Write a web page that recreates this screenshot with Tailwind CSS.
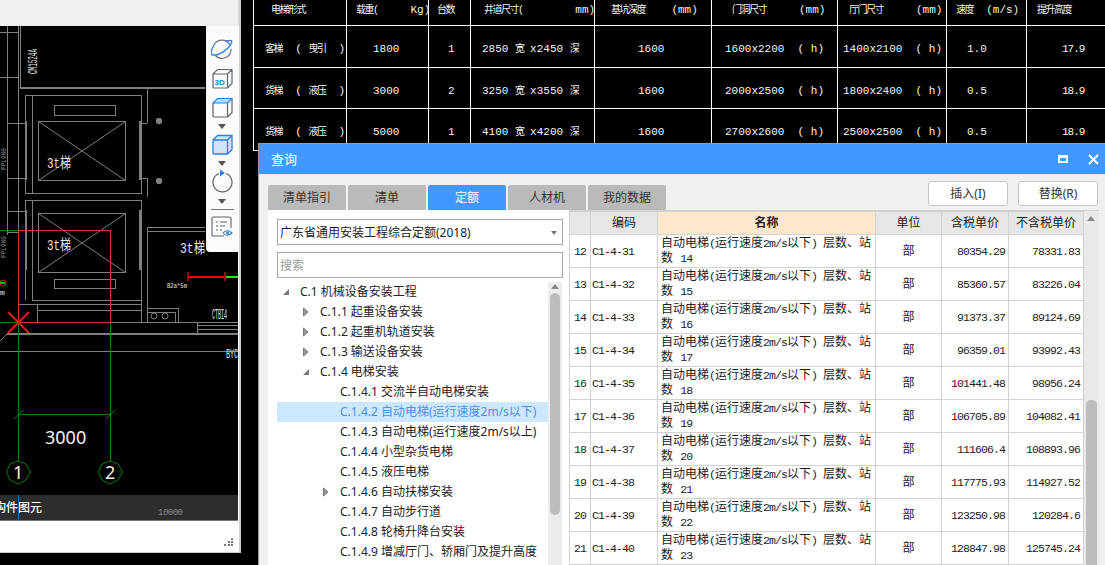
<!DOCTYPE html>
<html lang="zh-CN">
<head>
    <meta charset="UTF-8">
    <title>查询</title>
    <script src="https://cdn.jsdelivr.net/npm/@tailwindcss/browser@4"></script>
</head>
<body class="bg-black overflow-hidden font-['Noto_Sans','Noto_Sans_CJK_SC',sans-serif]">
<div class="relative w-[1105px] h-[565px] overflow-hidden">

    <!-- CAD window -->
    <div class="absolute left-0 top-0 w-[241px] h-[553px] bg-white border-r-2 border-b border-[#d0d0d0] flex flex-col">
        <div class="h-[26px] bg-[#f0f0f0] border-r border-[#dcdcdc]"></div>
        <div class="relative w-[238px] h-[495px] bg-black overflow-hidden">
            <svg class="block" width="238" height="495" viewBox="0 26 238 495" fill="none" stroke="#7f7f7f" stroke-width="1" shape-rendering="crispEdges">
                <!-- walls -->
                <path d="M7.5 26V235M18.5 26V322M0 32.5H18M0 77.5H18M20.5 26V87M20 87.5H205M20 88.5H205M7 123.5H25M7 178.5H25M7 211.5H25M7 232.5H18"/>
                <path d="M147.5 88V123M141 123.5H147M141 178.5H147M147.5 178V197M147 227.5H205M147 231.5H205M147.5 227V322"/>
                <!-- lift 1 -->
                <rect x="25" y="95" width="116" height="98"/>
                <path d="M32.5 95V193"/>
                <rect x="54" y="105" width="61" height="10"/>
                <rect x="38.5" y="121.5" width="87" height="59"/>
                <path d="M38.5 121.5L125.5 180.5M125.5 121.5L38.5 180.5" shape-rendering="auto"/>
                <path d="M26 121V180M140 121V180" stroke-width="2"/>
                <circle cx="159" cy="121" r="2.5" fill="#7f7f7f"/>
                <circle cx="159" cy="181" r="2.5" fill="#7f7f7f"/>
                <!-- lift 2 -->
                <path d="M25.5 300V200H141V300M32.5 200V300"/>
                <rect x="38.5" y="213.5" width="87" height="59"/>
                <path d="M38.5 213.5L125.5 272.5M125.5 213.5L38.5 272.5" shape-rendering="auto"/>
                <path d="M26 210V270M140 210V270" stroke-width="2"/>
                <rect x="54" y="279" width="61" height="9"/>
                <path d="M32 300.5H141M18 304.5H141M37 310.5H141M37.5 304V322M141.5 200V322"/>
                <path d="M147 308.5H178V322M147 312.5H175V322"/>
                <circle cx="154" cy="316" r="3" shape-rendering="auto"/>
                <circle cx="165" cy="316" r="3" shape-rendering="auto"/>
                <path d="M18 322.5H197M197.5 322V333M197 325.5H238M197 329.5H238M178 322.5H238"/>
                <path d="M7 333.5H238M7 334.5H238M0 351.5H238"/>
                <path d="M7 334L0 341" shape-rendering="auto"/>
                <!-- axis -->
                <path d="M0 230.5H18M0 322.5H18M18.5 322V461M110.5 322V461M18 414.5H110" stroke="#008000"/>
                <g stroke="#008000" shape-rendering="auto">
                    <path d="M14 419L23 410M106 419L115 410"/>
                    <polygon points="18,461 26,464 30.500,472 26,480 18,484 10,480 6.500,472 10,464"/>
                    <polygon points="110,461 118,464 122.500,472 118,480 110,484 102,480 98.500,472 102,464"/>
                </g>
                <path d="M18.500 230.500H110.500V322.500H18.500Z" stroke="#dc3030"/>
                <path d="M8 312L29 333M29 312L8 333" stroke="#ff1010" stroke-width="2" shape-rendering="auto"/>
                <circle cx="3" cy="283" r="3" stroke="#e02020" shape-rendering="auto"/>
                <path d="M0 283H5" stroke="#00c000" stroke-width="2"/>
                <path d="M188 276.500H224" stroke="#ff0000" stroke-width="2"/>
                <path d="M224 276.500H238" stroke="#00ff00" stroke-width="2"/>
                <path d="M188 272V281M224.500 272V281" stroke="#a00000" stroke-width="2"/>
                <!-- labels -->
                <g fill="#e8e8e8" stroke="none" font-family="Liberation Mono, Noto Sans CJK SC, monospace" shape-rendering="auto" lengthAdjust="spacingAndGlyphs">
                    <text x="47" y="168" font-size="15" textLength="24" lengthAdjust="spacingAndGlyphs">3t梯</text>
                    <text x="47" y="250" font-size="15" textLength="24" lengthAdjust="spacingAndGlyphs">3t梯</text>
                    <text x="180" y="253" font-size="15" textLength="25" lengthAdjust="spacingAndGlyphs">3t梯</text>
                    <text x="167" y="288" font-size="8" textLength="20" lengthAdjust="spacingAndGlyphs">B2a*5m</text>
                    <text x="212" y="319" font-size="14" textLength="15" lengthAdjust="spacingAndGlyphs">CTBI4</text>
                    <text x="226" y="358" font-size="13" textLength="12" lengthAdjust="spacingAndGlyphs">BYC</text>
                    <text transform="translate(37 74) rotate(-90)" font-size="12" textLength="25" lengthAdjust="spacingAndGlyphs">CM1524A</text>
                    <text transform="translate(6 170) rotate(-90)" font-size="8" fill="#8a8a8a" textLength="22" lengthAdjust="spacingAndGlyphs">FPL900</text>
                    <text transform="translate(6 258) rotate(-90)" font-size="8" fill="#8a8a8a" textLength="22" lengthAdjust="spacingAndGlyphs">FPL900</text>
                    <text x="0" y="295" font-size="8">m</text>
                </g>
                <g fill="#f4f4f4" stroke="none" font-family="Noto Sans, sans-serif" shape-rendering="auto">
                    <text x="45" y="444" font-size="18">3000</text>
                    <text x="13" y="479" font-size="18">1</text>
                    <text x="105" y="479" font-size="18">2</text>
                </g>
            </svg>

            <!-- status strip -->
            <div class="absolute left-0 right-0 bottom-0 h-[26px] bg-[#2d2d2d] border-b border-[#777] flex items-center overflow-hidden">
                <span class="text-white text-[12px] font-medium ml-[-6px] leading-none">构件图元</span>
                <span class="absolute left-[158px] bottom-0 text-[9px] text-[#8a8a8a] font-['Liberation_Mono',monospace] tracking-[-0.5px]">10000</span>
                <span class="absolute left-[18px] top-0 bottom-0 w-px bg-[#1c6ea8]"></span>
            </div>

            <!-- view toolbar -->
            <div class="absolute left-[206px] top-0 w-[32px] h-[226px] bg-[#fbfbfb] rounded-bl-sm flex flex-col items-center pt-[13px]">
                <svg class="ml-[-1px]" width="22" height="20" viewBox="0 0 22 20" fill="none" stroke-width="1.200">
                    <path d="M3 6A9 9 0 0 1 19 6M20 10A9 9 0 0 1 4 16" stroke="#6f7580"/>
                    <path d="M3 6C0 11 -1 16 2 16C6 17 13 13 17 9C21 5 22 1 19 1.500C17 1.500 15 2 14 2.500" stroke="#2f7fe8" stroke-width="1.300"/>
                </svg>
                <svg class="mt-[9px]" width="21" height="21" viewBox="0 0 21 21" fill="none" stroke="#5f6670" stroke-width="1.200">
                    <path d="M1 6L5.500 1.500H20V15.500L15.500 20H2Q1 20 1 19ZM1 6H15.500V20M15.500 6L20 1.500"/>
                    <text x="2.500" y="17" font-size="8" font-weight="700" fill="#2f7fe8" stroke="none" font-family="Liberation Sans, sans-serif">3D</text>
                </svg>
                <svg class="mt-[8px]" width="21" height="21" viewBox="0 0 21 21" fill="none" stroke="#5f6670" stroke-width="1.200">
                    <path d="M1 6L5.500 1.500H20L15.500 6Z" fill="#bcd8fb" stroke="#2f7fe8"/>
                    <path d="M1 6V19Q1 20 2 20H15.500V6M15.500 20L20 15.500V1.500"/>
                </svg>
                <div class="mt-[6px] w-0 h-0 border-x-[4px] border-x-transparent border-t-[5px] border-t-[#555]"></div>
                <svg class="mt-[5px]" width="21" height="21" viewBox="0 0 21 21" fill="none" stroke="#2f7fe8" stroke-width="1.300">
                    <path d="M1 6L5.500 1.500H20V15.500L15.500 20H2Q1 20 1 19Z" fill="#cfe3fb"/>
                    <path d="M1 6H15.500V20M15.500 6L20 1.500"/>
                </svg>
                <div class="mt-[6px] w-0 h-0 border-x-[4px] border-x-transparent border-t-[5px] border-t-[#555]"></div>
                <svg class="mt-[3px]" width="22" height="24" viewBox="0 0 22 24" fill="none">
                    <path d="M8 4.500A9.500 9.500 0 1 0 15 4.500" stroke="#5f6670" stroke-width="1.200"/>
                    <path d="M9 0.500L14 4L9 7.500Z" fill="#2f7fe8"/>
                </svg>
                <div class="mt-[6px] w-0 h-0 border-x-[4px] border-x-transparent border-t-[5px] border-t-[#555]"></div>
                <div class="mt-[5px] w-[23px] h-px bg-[#777]"></div>
                <svg class="mt-[6px]" width="22" height="22" viewBox="0 0 22 22" fill="none" stroke="#5f6670" stroke-width="1.100">
                    <path d="M13 20H2Q1 20 1 19V2Q1 1 2 1H18Q20 1 20 2V12"/>
                    <path d="M5 6H7M9 6H16M5 10H7M9 10H14M5 14H7M9 14H11"/>
                    <path d="M12 17Q16 12.500 21 17Q16 21.500 12 17Z" stroke="#2f7fe8"/>
                    <circle cx="16.500" cy="17" r="1.500" fill="#2f7fe8" stroke="none"/>
                </svg>
            </div>
        </div>
        <div class="relative flex-1 bg-white">
            <svg class="absolute right-[6px] bottom-[6px]" width="9" height="8" viewBox="0 0 9 8" fill="#777">
                <rect x="7" y="0" width="2" height="2"/><rect x="4" y="3" width="2" height="2"/><rect x="7" y="3" width="2" height="2"/>
                <rect x="0" y="6" width="2" height="2"/><rect x="4" y="6" width="2" height="2"/><rect x="7" y="6" width="2" height="2"/>
            </svg>
        </div>
    </div>

    <!-- drawing of the lift schedule -->
    <table class="absolute left-[253px] top-[-1px] w-[900px] table-fixed border-collapse text-[#f4f4f4] whitespace-pre text-[11px] leading-none font-['Liberation_Mono','Noto_Sans_CJK_SC',monospace] [&_b]:font-normal [&_b]:text-[10px] [&_b]:tracking-[-1.5px] [&_td]:border [&_td]:border-white [&_tr]:h-[41.500px] [&_td]:pt-[7px]">
        <colgroup>
            <col class="w-[93px]"><col class="w-[82px]"><col class="w-[42px]"><col class="w-[124px]"><col class="w-[117px]"><col class="w-[126px]"><col class="w-[109px]"><col class="w-[80px]"><col class="w-[127px]">
        </colgroup>
        <tr class="!h-[26px] [&_td]:!pt-0 [&_td]:pb-[4px]">
            <td class="pl-[17px]"><b>电梯形式</b></td>
            <td class="pl-[9px]"><b>载重(</b>     Kg)</td>
            <td class="pl-[8px]"><b>台数</b></td>
            <td class="pl-[13px]"><b>井道尺寸(</b>        mm)</td>
            <td class="pl-[16px]"><b>基坑深度</b>    (mm)</td>
            <td class="pl-[20px]"><b>门洞尺寸</b>     (mm)</td>
            <td class="pl-[11px]"><b>厅门尺寸</b>     (mm)</td>
            <td class="pl-[9px]"><b>速度</b>  (m/s)</td>
            <td class="pl-[10px]"><b>提升高度</b>     (m)</td>
        </tr>
        <tr>
            <td class="pl-[11px]"><b>客梯</b>  ( <b>曳引</b>  )</td>
            <td class="pl-[26px]">1800</td>
            <td class="pl-[19px]">1</td>
            <td class="pl-[11px]">2850 <b>宽</b> x2450 <b>深</b></td>
            <td class="pl-[43px]">1600</td>
            <td class="pl-[13px]">1600x2200  ( h)</td>
            <td class="pl-[5px]">1400x2100  ( h)</td>
            <td class="pl-[20px]">1.0</td>
            <td class="pl-[35px] tracking-[-1px]">17.9</td>
        </tr>
        <tr>
            <td class="pl-[11px]"><b>货梯</b>  ( <b>液压</b>  )</td>
            <td class="pl-[26px]">3000</td>
            <td class="pl-[19px]">2</td>
            <td class="pl-[11px]">3250 <b>宽</b> x3550 <b>深</b></td>
            <td class="pl-[43px]">1600</td>
            <td class="pl-[13px]">2000x2500  ( h)</td>
            <td class="pl-[5px]">1800x2400  ( h)</td>
            <td class="pl-[20px]">0.5</td>
            <td class="pl-[35px] tracking-[-1px]">18.9</td>
        </tr>
        <tr>
            <td class="pl-[11px]"><b>货梯</b>  ( <b>液压</b>  )</td>
            <td class="pl-[26px]">5000</td>
            <td class="pl-[19px]">1</td>
            <td class="pl-[11px]">4100 <b>宽</b> x4200 <b>深</b></td>
            <td class="pl-[43px]">1600</td>
            <td class="pl-[13px]">2700x2600  ( h)</td>
            <td class="pl-[5px]">2500x2500  ( h)</td>
            <td class="pl-[20px]">0.5</td>
            <td class="pl-[35px] tracking-[-1px]">18.9</td>
        </tr>
    </table>

    <!-- query dialog -->
    <div class="absolute left-[258px] top-[143px] right-0 bottom-0 bg-[#f0f0f0] border-t border-l border-[#9a9a9a] flex flex-col overflow-hidden">
        <div class="h-[30px] shrink-0 bg-[#4298ff] flex items-center text-white text-[13px] pl-[12px] pr-[6px]">
            <span class="flex-1 pt-[2px]">查询</span>
            <span class="w-[10px] h-[8px] border-2 border-t-[3px] border-white mr-[20px]"></span>
            <svg width="11" height="11" viewBox="0 0 11 11" stroke="white" stroke-width="2"><path d="M1 1L10 10M10 1L1 10"/></svg>
        </div>

        <div class="h-[36px] shrink-0 flex items-end pl-[9px] pr-[7px] text-[12px] text-[#333]">
            <div class="flex gap-[2px] flex-1">
                <div class="w-[78px] h-[25px] flex items-center justify-center rounded-t-[2px] bg-[#bababa]">清单指引</div>
                <div class="w-[78px] h-[25px] flex items-center justify-center rounded-t-[2px] bg-[#bababa]">清单</div>
                <div class="w-[78px] h-[25px] flex items-center justify-center rounded-t-[2px] bg-[#4298ff] text-white">定额</div>
                <div class="w-[78px] h-[25px] flex items-center justify-center rounded-t-[2px] bg-[#bababa]">人材机</div>
                <div class="w-[78px] h-[25px] flex items-center justify-center rounded-t-[2px] bg-[#bababa]">我的数据</div>
            </div>
            <div class="flex gap-[10px] self-start mt-[7px]">
                <button class="w-[80px] h-[25px] bg-white border border-[#c4c4c4] rounded-[3px]">插入(I)</button>
                <button class="w-[80px] h-[25px] bg-white border border-[#c4c4c4] rounded-[3px]">替换(R)</button>
            </div>
        </div>

        <div class="flex-1 flex min-h-0 pl-[9px]">
            <!-- left: quota tree -->
            <div class="w-[301px] shrink-0 bg-white pl-[9px] pr-[6px] pt-[9px] flex flex-col">
                <div class="h-[26px] shrink-0 border border-[#a8a8a8] flex items-center pl-[2px] pr-[5px] pt-[2px] text-[12px] text-[#222]">
                    <span class="flex-1">广东省通用安装工程综合定额(2018)</span>
                    <span class="w-0 h-0 border-x-[3px] border-x-transparent border-t-[4px] border-t-[#777]"></span>
                </div>
                <div class="h-[26px] shrink-0 mt-[7px] border border-[#a8a8a8] flex items-center pl-[2px] pt-[2px] text-[12px] text-[#999]">搜索</div>
                <div class="flex-1 flex min-h-0 mt-[4px]">
                    <div id="tree" class="w-[271px] overflow-hidden text-[12px] text-[#222]"></div>
                    <div class="relative w-[14px] bg-[#ececec]">
                        <span class="absolute left-[3px] top-[2px] w-0 h-0 border-x-[4px] border-x-transparent border-b-[5px] border-b-[#888]"></span>
                        <span class="absolute left-[2px] top-[11px] w-[10px] h-[222px] rounded-[5px] bg-[#bcbcbc]"></span>
                    </div>
                </div>
            </div>

            <!-- right: quota list -->
            <div class="w-[515px] shrink-0 bg-white overflow-hidden border-t border-[#cfcfcf]">
                <table class="w-[514px] table-fixed border-collapse text-[12px] text-[#222] [&_i]:not-italic [&_i]:font-['Liberation_Mono',monospace] [&_i]:text-[11.500px] [&_i]:tracking-[-0.9px] [&_td]:border [&_td]:border-[#d2d2d2] [&_th]:border [&_th]:border-[#d2d2d2]">
                    <colgroup>
                        <col class="w-[21px]"><col class="w-[67px]"><col class="w-[218px]"><col class="w-[66px]"><col class="w-[67px]"><col class="w-[75px]">
                    </colgroup>
                    <thead>
                        <tr class="h-[23px] bg-[#e6e6e6] font-normal">
                            <th class="font-normal"></th>
                            <th class="font-normal">编码</th>
                            <th class="font-bold bg-[#ffe7cc] border-b-[#4298ff]">名称</th>
                            <th class="font-normal">单位</th>
                            <th class="font-normal">含税单价</th>
                            <th class="font-normal">不含税单价</th>
                        </tr>
                    </thead>
                    <tbody id="rows"></tbody>
                </table>
            </div>

            <!-- list scrollbar -->
            <div class="relative w-[15px] shrink-0 bg-[#e9e9e9] border-t border-[#cfcfcf]">
                <span class="absolute left-[3px] top-[5px] w-0 h-0 border-x-[4px] border-x-transparent border-b-[5px] border-b-[#888]"></span>
                <span class="absolute left-[2px] top-[189px] w-[11px] h-[170px] rounded-t-[5px] bg-[#bcbcbc]"></span>
            </div>
        </div>
    </div>
</div>

<script>
    // tree rows: indent level, arrow state, label
    const treeRows = [
        [0, 'open', 'C.1 机械设备安装工程'],
        [1, 'closed', 'C.1.1 起重设备安装'],
        [1, 'closed', 'C.1.2 起重机轨道安装'],
        [1, 'closed', 'C.1.3 输送设备安装'],
        [1, 'open', 'C.1.4 电梯安装'],
        [2, '', 'C.1.4.1 交流半自动电梯安装'],
        [2, '', 'C.1.4.2 自动电梯(运行速度2m/s以下)'],
        [2, '', 'C.1.4.3 自动电梯(运行速度2m/s以上)'],
        [2, '', 'C.1.4.4 小型杂货电梯'],
        [2, '', 'C.1.4.5 液压电梯'],
        [2, 'closed', 'C.1.4.6 自动扶梯安装'],
        [2, '', 'C.1.4.7 自动步行道'],
        [2, '', 'C.1.4.8 轮椅升降台安装'],
        [2, '', 'C.1.4.9 增减厅门、轿厢门及提升高度']
    ];
    const indent = ['pl-[5px]', 'pl-[25px]', 'pl-[45px]'];
    const arrows = {
        open: '<svg width="8" height="8" viewBox="0 0 8 8" fill="#777"><path d="M7 1V7H1Z"/></svg>',
        closed: '<svg width="8" height="10" viewBox="0 0 8 10" fill="#999" stroke="#777"><path d="M1.500 1L6 5L1.500 9Z"/></svg>',
        '': ''
    };
    document.getElementById('tree').innerHTML = treeRows.map((r, i) => `
        <div class="h-5 flex items-center whitespace-nowrap ${indent[r[0]]} ${i === 6 ? 'bg-[#cce8ff] text-[#4a8fe8]' : ''}">
            <span class="w-[18px] shrink-0 flex items-center">${arrows[r[1]]}</span>${r[2]}
        </div>`).join('');

    // quota list
    const quotaRows = [
        [12, 'C1-4-31', 14, '80354.29', '78331.83'],
        [13, 'C1-4-32', 15, '85360.57', '83226.04'],
        [14, 'C1-4-33', 16, '91373.37', '89124.69'],
        [15, 'C1-4-34', 17, '96359.01', '93992.43'],
        [16, 'C1-4-35', 18, '101441.48', '98956.24'],
        [17, 'C1-4-36', 19, '106705.89', '104082.41'],
        [18, 'C1-4-37', 20, '111606.4', '108893.96'],
        [19, 'C1-4-38', 21, '117775.93', '114927.52'],
        [20, 'C1-4-39', 22, '123250.98', '120284.6'],
        [21, 'C1-4-40', 23, '128847.98', '125745.24']
    ];
    document.getElementById('rows').innerHTML = quotaRows.map(r => `
        <tr class="h-[33px]">
            <td class="text-center"><i>${r[0]}</i></td>
            <td class="pl-[1px]"><i>${r[1]}</i></td>
            <td class="pl-[3px] leading-[14px] whitespace-nowrap">自动电梯<i>(</i>运行速度<i>2m/s</i>以下<i>) </i>层数、站<br>数 <i class="ml-[4px]">${r[2]}</i></td>
            <td class="text-center">部</td>
            <td class="text-right pr-[3px]"><i>${r[3]}</i></td>
            <td class="text-right pr-[3px]"><i>${r[4]}</i></td>
        </tr>`).join('');
</script>
</body>
</html>
